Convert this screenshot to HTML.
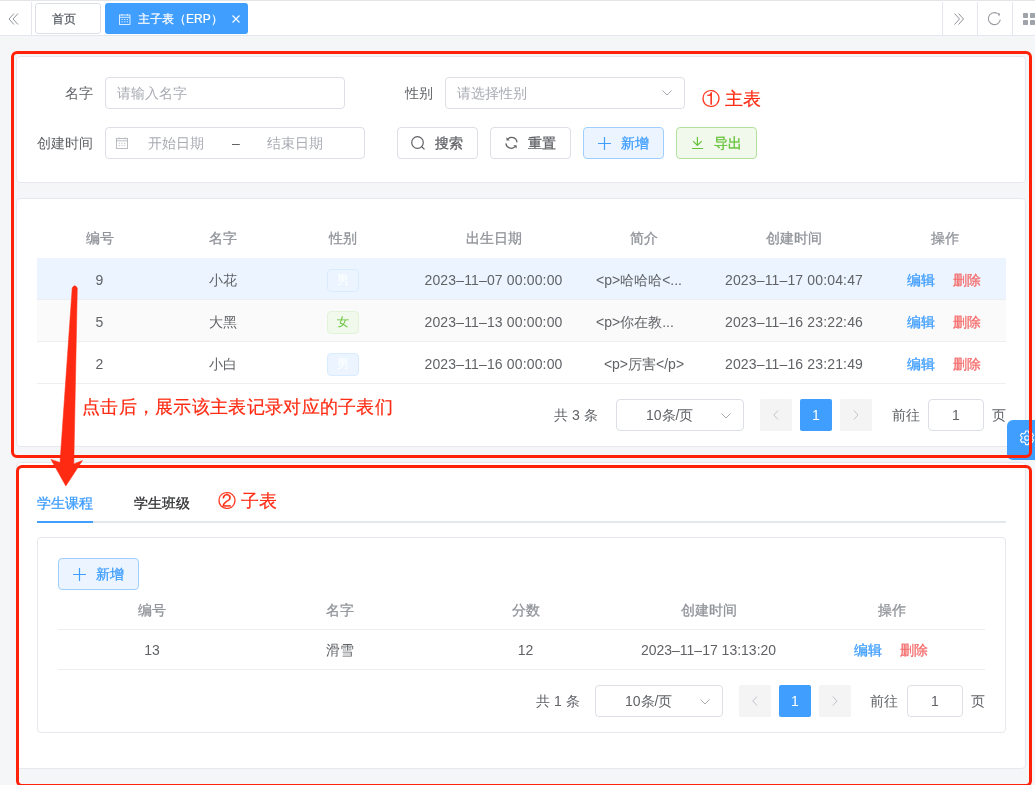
<!DOCTYPE html>
<html><head><meta charset="utf-8">
<style>
*{box-sizing:border-box;margin:0;padding:0}
html,body{width:1035px;height:785px;overflow:hidden}
body{position:relative;background:#f5f6f8;font-family:"Liberation Sans",sans-serif;color:#606266;font-size:14px}
.abs{position:absolute}
svg{position:absolute;overflow:visible}
#tags{left:0;top:0;width:1035px;height:36px;background:#fff;border-top:1px solid #e4e5e8;border-bottom:1px solid #e4e7ed}
.vdiv{position:absolute;top:1px;width:1px;height:34px;background:#e4e7ed}
.tab{position:absolute;top:3px;height:31px;border-radius:3px;font-size:12px;line-height:29px;white-space:nowrap}
#tab1{left:35px;width:66px;border:1px solid #dcdfe6;color:#5a5e66;padding-left:16px;line-height:31px;-webkit-text-stroke-width:0.25px}
#tab2{left:105px;width:143px;background:#409eff;color:#fff}
.card{position:absolute;left:16px;width:1010px;background:#fff;border:1px solid #e6e8ed;border-radius:4px}
.lbl{position:absolute;width:68px;text-align:right;padding-right:12px;line-height:32px;color:#606266;font-size:14px;white-space:nowrap}
.inp{position:absolute;height:32px;border:1px solid #dcdfe6;border-radius:4px;background:#fff;line-height:30px;color:#a8abb2;font-size:14px;white-space:nowrap}
.btn{position:absolute;height:32px;width:81px;border:1px solid #dcdfe6;border-radius:4px;background:#fff;line-height:30px;font-size:14px;color:#606266;white-space:nowrap;-webkit-text-stroke-width:0.3px}
.btn span{position:absolute;top:0}
.red{position:absolute;border:3px solid #ff2208;border-radius:6px}
.anno{position:absolute;color:#ff2a12;font-size:18px;line-height:20px;white-space:nowrap;-webkit-text-stroke-width:0.2px}
.row{position:absolute;display:flex;border-bottom:1px solid #eceef2}
.row>div{text-align:center;white-space:nowrap;overflow:hidden;flex:none}
.hd>div{color:#909399;-webkit-text-stroke-width:0.3px}
.tag{display:inline-block;width:32px;height:23px;border-radius:4px;font-size:12px;line-height:21px;border:1px solid;vertical-align:middle;position:relative;top:-1px}
.tb{color:#fff;background:#ecf5ff;border-color:#d9ecff}
.tg{color:#67c23a;background:#f0f9eb;border-color:#e1f3d8}
.lk{color:#409eff;-webkit-text-stroke-width:0.3px}
.ld{color:#f56c6c;-webkit-text-stroke-width:0.3px;margin-left:18px}
.pg{position:absolute;height:32px;line-height:32px;font-size:14px;color:#606266;white-space:nowrap}
.pbox{position:absolute;height:32px;border:1px solid #dcdfe6;border-radius:4px;background:#fff;line-height:30px;text-align:center;color:#606266}
.pbtn{position:absolute;width:32px;height:32px;border-radius:2px;background:#f4f4f5}
.pact{position:absolute;width:32px;height:32px;border-radius:2px;background:#409eff;color:#fff;text-align:center;line-height:32px}
</style></head><body style="will-change:transform">

<!-- top bar -->
<div id="tags" class="abs">
  <div class="vdiv" style="left:31px"></div>
  <div class="vdiv" style="left:942px"></div>
  <div class="vdiv" style="left:977px"></div>
  <div class="vdiv" style="left:1012px"></div>
</div>
<svg style="left:8px;top:13px" width="11" height="12" viewBox="0 0 11 12"><path d="M6 0.5 L1 6 L6 11.5 M10 0.5 L5 6 L10 11.5" fill="none" stroke="#909399" stroke-width="1"/></svg>
<svg style="left:954px;top:13px" width="11" height="12" viewBox="0 0 11 12"><path d="M0.5 0.5 L5.5 6 L0.5 11.5 M4.5 0.5 L9.5 6 L4.5 11.5" fill="none" stroke="#909399" stroke-width="1"/></svg>
<svg style="left:982px;top:8px" width="25" height="22" viewBox="982 8 25 22"><path d="M1000.3 19.6 A6 6 0 1 1 997.2 13.3" fill="none" stroke="#9a9da3" stroke-width="1.1"/><path d="M996.8 13 L999.9 13.2 L999.4 16.4 Z" fill="#9a9da3"/></svg>
<svg style="left:1023px;top:13px" width="14" height="12" viewBox="0 0 14 12"><rect x="0" y="0" width="5" height="5" rx="0.7" fill="#9fa3aa"/><rect x="7" y="0" width="5" height="5" rx="0.7" fill="#9fa3aa"/><rect x="0" y="7" width="5" height="5" rx="0.7" fill="#9fa3aa"/><rect x="7" y="7" width="5" height="5" rx="0.7" fill="#9fa3aa"/></svg>

<div class="tab" id="tab1">首页</div>
<div class="tab" id="tab2"><span style="position:absolute;left:33px;top:2px;-webkit-text-stroke-width:0.2px">主子表（ERP）</span></div>
<svg style="left:119px;top:14px" width="12" height="11" viewBox="0 0 12 11"><rect x="0.5" y="1" width="10.5" height="9.5" fill="none" stroke="#fff" stroke-width="0.8"/><path d="M0.5 3.3 H11 M3 0 V1.5 M8.5 0 V1.5" stroke="#fff" stroke-width="0.8"/><path d="M2.5 5.5 h1.3 M5.1 5.5 h1.3 M7.7 5.5 h1.3 M2.5 7.8 h1.3 M5.1 7.8 h1.3 M7.7 7.8 h1.3" stroke="#fff" stroke-width="0.8"/></svg>
<svg style="left:232px;top:15px" width="8" height="8" viewBox="0 0 8 8"><path d="M0.5 0.5 L7.5 7.5 M7.5 0.5 L0.5 7.5" stroke="#fff" stroke-width="1.1"/></svg>

<!-- card 1 search -->
<div class="card" style="top:56px;height:127px"></div>
<div class="lbl" style="left:37px;top:77px">名字</div>
<div class="inp" style="left:105px;top:77px;width:240px;padding-left:11px">请输入名字</div>
<div class="lbl" style="left:377px;top:77px">性别</div>
<div class="inp" style="left:445px;top:77px;width:240px;padding-left:11px">请选择性别</div>
<svg style="left:662px;top:90px" width="10" height="6" viewBox="0 0 10 6"><path d="M0.5 0.5 L5 5 L9.5 0.5" fill="none" stroke="#a8abb2" stroke-width="1"/></svg>
<div class="lbl" style="left:37px;top:127px">创建时间</div>
<div class="inp" style="left:105px;top:127px;width:260px">
  <span style="position:absolute;left:42px;top:0">开始日期</span>
  <span style="position:absolute;left:126px;top:0;color:#606266">–</span>
  <span style="position:absolute;left:161px;top:0">结束日期</span>
</div>
<svg style="left:116px;top:137px" width="12" height="12" viewBox="0 0 12 12"><rect x="0.5" y="1.5" width="11" height="10" fill="none" stroke="#b4b7bd" stroke-width="0.9"/><path d="M0.5 3.8 H11.5 M3 0.3 V2.3 M9 0.3 V2.3" stroke="#b4b7bd" stroke-width="0.9"/><path d="M2.7 6.3 h1.3 M5.3 6.3 h1.3 M8 6.3 h1.3 M2.7 8.6 h1.3 M5.3 8.6 h1.3 M8 8.6 h1.3" stroke="#b4b7bd" stroke-width="0.8"/></svg>

<div class="btn" style="left:397px;top:127px"><span style="left:37px">搜索</span></div>
<svg style="left:411px;top:136px" width="15" height="14" viewBox="0 0 15 14"><circle cx="6.5" cy="6.5" r="5.8" fill="none" stroke="#606266" stroke-width="1.2"/><path d="M10.8 10.8 L13.5 13.4" stroke="#606266" stroke-width="1.2"/></svg>
<div class="btn" style="left:490px;top:127px"><span style="left:37px">重置</span></div>
<svg style="left:500px;top:130px" width="25" height="25" viewBox="500 130 25 25"><path d="M507.6 139.3 A5.3 5.3 0 0 1 517 142.4" fill="none" stroke="#606266" stroke-width="1.2"/><path d="M506.4 137.3 L506.5 140.6 L509.7 140.5 Z" fill="#606266"/><path d="M505.9 143.4 A5.3 5.3 0 0 0 515 146.6" fill="none" stroke="#606266" stroke-width="1.2"/><path d="M513.3 145.3 L516.6 145.3 L516.6 148.5 Z" fill="#606266"/></svg>
<div class="btn" style="left:583px;top:127px;background:#ecf5ff;border-color:#a0cfff;color:#409eff"><span style="left:37px">新增</span></div>
<svg style="left:598px;top:137px" width="13" height="13" viewBox="0 0 13 13"><path d="M0 6.5 H13 M6.5 0 V13" stroke="#409eff" stroke-width="1.2"/></svg>
<div class="btn" style="left:676px;top:127px;background:#f0f9eb;border-color:#b3e19d;color:#67c23a"><span style="left:37px">导出</span></div>
<svg style="left:685px;top:130px" width="25" height="25" viewBox="685 130 25 25"><path d="M697.4 137 V145.4 M693.1 141.1 L697.4 145.5 L701.7 141.1 M692 148.5 H703" fill="none" stroke="#67c23a" stroke-width="1.2"/></svg>

<!-- card 2 table -->
<div class="card" style="top:198px;height:249px"></div>
<div class="row hd" style="left:37px;top:218px;height:40px;line-height:40px;border-bottom:none">
  <div style="width:125px">编号</div><div style="width:121px">名字</div><div style="width:120px">性别</div><div style="width:181px">出生日期</div><div style="width:120px">简介</div><div style="width:180px">创建时间</div><div style="width:122px">操作</div>
</div>
<div class="row" style="left:37px;top:258px;height:42px;line-height:39px;padding-top:3px;background:#ecf5ff">
  <div style="width:125px">9</div><div style="width:121px">小花</div><div style="width:120px"><span class="tag tb">男</span></div><div style="width:181px;letter-spacing:0.15px">2023–11–07 00:00:00</div><div style="width:120px;text-align:left;padding-left:12px">&lt;p&gt;哈哈哈&lt;...</div><div style="width:180px;letter-spacing:0.15px">2023–11–17 00:04:47</div><div style="width:122px;padding-right:2px"><span class="lk">编辑</span><span class="ld">删除</span></div>
</div>
<div class="row" style="left:37px;top:300px;height:42px;line-height:39px;padding-top:3px;background:#fafafa">
  <div style="width:125px">5</div><div style="width:121px">大黑</div><div style="width:120px"><span class="tag tg">女</span></div><div style="width:181px;letter-spacing:0.15px">2023–11–13 00:00:00</div><div style="width:120px;text-align:left;padding-left:12px">&lt;p&gt;你在教...</div><div style="width:180px;letter-spacing:0.15px">2023–11–16 23:22:46</div><div style="width:122px;padding-right:2px"><span class="lk">编辑</span><span class="ld">删除</span></div>
</div>
<div class="row" style="left:37px;top:342px;height:42px;line-height:39px;padding-top:3px;background:#fff">
  <div style="width:125px">2</div><div style="width:121px">小白</div><div style="width:120px"><span class="tag tb">男</span></div><div style="width:181px;letter-spacing:0.15px">2023–11–16 00:00:00</div><div style="width:120px">&lt;p&gt;厉害&lt;/p&gt;</div><div style="width:180px;letter-spacing:0.15px">2023–11–16 23:21:49</div><div style="width:122px;padding-right:2px"><span class="lk">编辑</span><span class="ld">删除</span></div>
</div>


<!-- main pagination -->
<div class="pg" style="left:554px;top:399px">共 3 条</div>
<div class="pbox" style="left:616px;top:399px;width:128px"><span style="position:absolute;left:29px;top:0">10条/页</span></div>
<svg style="left:721px;top:413px" width="10" height="6" viewBox="0 0 10 6"><path d="M0.5 0.5 L5 5 L9.5 0.5" fill="none" stroke="#a8abb2" stroke-width="1"/></svg>
<div class="pbtn" style="left:760px;top:399px"></div>
<svg style="left:773px;top:410px" width="6" height="10" viewBox="0 0 6 10"><path d="M5 0.5 L0.8 5 L5 9.5" fill="none" stroke="#c0c4cc" stroke-width="1"/></svg>
<div class="pact" style="left:800px;top:399px">1</div>
<div class="pbtn" style="left:840px;top:399px"></div>
<svg style="left:853px;top:410px" width="6" height="10" viewBox="0 0 6 10"><path d="M0.8 0.5 L5 5 L0.8 9.5" fill="none" stroke="#c0c4cc" stroke-width="1"/></svg>
<div class="pg" style="left:892px;top:399px">前往</div>
<div class="pbox" style="left:928px;top:399px;width:56px">1</div>
<div class="pg" style="left:992px;top:399px">页</div>

<!-- card 3 -->
<div class="card" style="top:462px;height:307px"></div>
<div class="abs" style="left:37px;top:521px;width:969px;height:2px;background:#e4e7ed"></div>
<div class="abs" style="left:37px;top:521px;width:56px;height:2px;background:#409eff"></div>
<div class="abs" style="left:37px;top:493px;line-height:20px;color:#409eff;-webkit-text-stroke-width:0.3px;font-size:14px">学生课程</div>
<div class="abs" style="left:134px;top:493px;line-height:20px;color:#303133;-webkit-text-stroke-width:0.3px;font-size:14px">学生班级</div>
<div class="card" style="left:37px;top:537px;width:969px;height:196px"></div>
<div class="btn" style="left:58px;top:558px;background:#ecf5ff;border-color:#a0cfff;color:#409eff"><span style="left:37px">新增</span></div>
<svg style="left:73px;top:568px" width="13" height="13" viewBox="0 0 13 13"><path d="M0 6.5 H13 M6.5 0 V13" stroke="#409eff" stroke-width="1.2"/></svg>
<div class="row hd" style="left:58px;top:590px;height:40px;line-height:37px;padding-top:2px">
  <div style="width:188px">编号</div><div style="width:187px">名字</div><div style="width:185px">分数</div><div style="width:181px">创建时间</div><div style="width:186px">操作</div>
</div>
<div class="row" style="left:58px;top:630px;height:40px;line-height:37px;padding-top:2px">
  <div style="width:188px">13</div><div style="width:187px">滑雪</div><div style="width:185px">12</div><div style="width:181px">2023–11–17 13:13:20</div><div style="width:186px;padding-right:2px"><span class="lk">编辑</span><span class="ld">删除</span></div>
</div>
<!-- sub pagination -->
<div class="pg" style="left:536px;top:685px">共 1 条</div>
<div class="pbox" style="left:595px;top:685px;width:128px"><span style="position:absolute;left:29px;top:0">10条/页</span></div>
<svg style="left:700px;top:699px" width="10" height="6" viewBox="0 0 10 6"><path d="M0.5 0.5 L5 5 L9.5 0.5" fill="none" stroke="#a8abb2" stroke-width="1"/></svg>
<div class="pbtn" style="left:739px;top:685px"></div>
<svg style="left:752px;top:696px" width="6" height="10" viewBox="0 0 6 10"><path d="M5 0.5 L0.8 5 L5 9.5" fill="none" stroke="#c0c4cc" stroke-width="1"/></svg>
<div class="pact" style="left:779px;top:685px">1</div>
<div class="pbtn" style="left:819px;top:685px"></div>
<svg style="left:832px;top:696px" width="6" height="10" viewBox="0 0 6 10"><path d="M0.8 0.5 L5 5 L0.8 9.5" fill="none" stroke="#c0c4cc" stroke-width="1"/></svg>
<div class="pg" style="left:870px;top:685px">前往</div>
<div class="pbox" style="left:907px;top:685px;width:56px">1</div>
<div class="pg" style="left:971px;top:685px">页</div>

<!-- settings float -->
<div class="abs" style="left:1007px;top:420px;width:48px;height:40px;background:#409eff;border-radius:6px"></div>
<svg style="left:1019px;top:430px" width="16" height="16" viewBox="0 0 16 16"><path d="M6.6 1 h2.8 l0.4 2 l1.5 0.9 l1.9 -0.7 l1.4 2.4 l-1.5 1.3 v1.8 l1.5 1.3 l-1.4 2.4 l-1.9 -0.7 l-1.5 0.9 l-0.4 2 h-2.8 l-0.4 -2 l-1.5 -0.9 l-1.9 0.7 l-1.4 -2.4 l1.5 -1.3 v-1.8 l-1.5 -1.3 l1.4 -2.4 l1.9 0.7 l1.5 -0.9 z" fill="none" stroke="#fff" stroke-width="1.1" stroke-linejoin="round"/><circle cx="8" cy="8" r="2.3" fill="none" stroke="#fff" stroke-width="1.1"/></svg>

<!-- annotations -->
<div class="red" style="left:11px;top:51px;width:1021px;height:407px"></div>
<div class="red" style="left:16px;top:465px;width:1016px;height:322px"></div>
<div class="anno" style="left:702px;top:89px">① 主表</div>
<div class="anno" style="left:218px;top:491px">② 子表</div>
<div class="anno" style="left:82px;top:397px;letter-spacing:0.3px">点击后，展示该主表记录对应的子表们</div>
<svg style="left:0;top:0" width="1035" height="785" viewBox="0 0 1035 785"><path d="M72.2 288 Q74.7 283.5 77.3 288 L73.8 464 L82.5 460.5 L65.8 486 L51 459.5 L60 462.5 Z" fill="#ff2a12" stroke="#ff2a12" stroke-width="0.5" stroke-linejoin="round"/></svg>

</body></html>
